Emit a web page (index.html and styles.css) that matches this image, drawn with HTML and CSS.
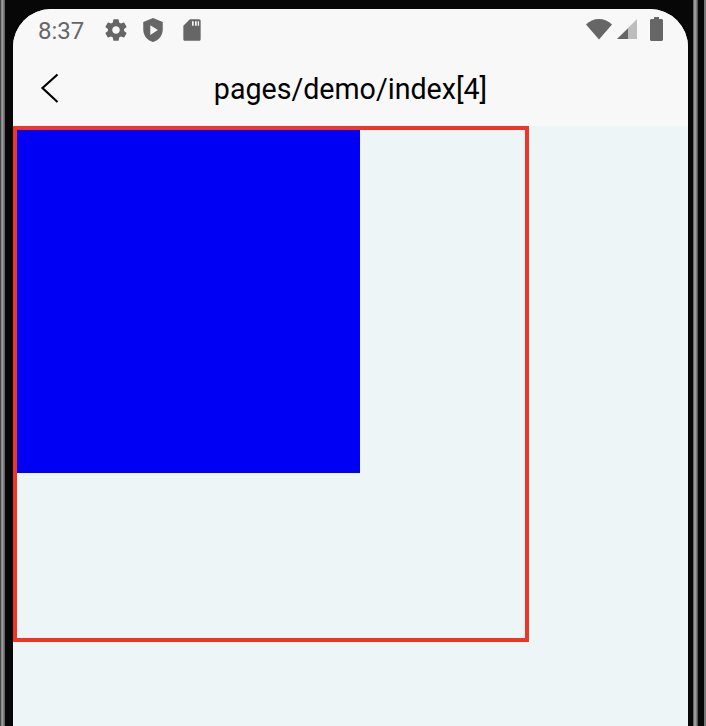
FILE: index.html
```html
<!DOCTYPE html>
<html lang="en">
<head>
<meta charset="utf-8">
<title>pages/demo/index[4]</title>
<link rel="stylesheet" href="styles.css">
</head>
<body>
<div class="device">
  <div class="rim rim-left"></div>
  <main class="screen">
    <header class="status">
      <div class="status-group">
        <span class="time">8:37</span>
        <svg class="ico ico-gear" viewBox="0 0 24 24"><path d="M19.43 12.98c.04-.32.07-.64.07-.98s-.03-.66-.07-.98l2.11-1.65c.19-.15.24-.42.12-.64l-2-3.46c-.12-.22-.39-.3-.61-.22l-2.49 1c-.52-.4-1.08-.73-1.69-.98l-.38-2.65C14.46 2.18 14.25 2 14 2h-4c-.25 0-.46.18-.49.42l-.38 2.65c-.61.25-1.17.59-1.69.98l-2.49-1c-.23-.09-.49 0-.61.22l-2 3.46c-.13.22-.07.49.12.64l2.11 1.65c-.04.32-.07.65-.07.98s.03.66.07.98l-2.11 1.65c-.19.15-.24.42-.12.64l2 3.46c.12.22.39.3.61.22l2.49-1c.52.4 1.08.73 1.69.98l.38 2.65c.03.24.24.42.49.42h4c.25 0 .46-.18.49-.42l.38-2.65c.61-.25 1.17-.59 1.69-.98l2.49 1c.23.09.49 0 .61-.22l2-3.46c.12-.22.07-.49-.12-.64l-2.11-1.65zM12 15.5c-1.93 0-3.5-1.57-3.5-3.5s1.57-3.5 3.5-3.5 3.5 1.57 3.5 3.5-1.57 3.5-3.5 3.5z"/></svg>
        <svg class="ico ico-shield" viewBox="0 0 24 24"><path fill-rule="evenodd" d="M12 1 3 4.500v7c0 5.500 3.800 10.300 9 11.500 5.200-1.200 9-6 9-11.500v-7zM9.500 7.500l7 4.500-7 4.500z"/></svg>
        <svg class="ico ico-sd" viewBox="0 0 24 24"><path fill-rule="evenodd" d="M10 2 4 8v12.500C4 21.300 4.700 22 5.500 22h13c.8 0 1.500-.7 1.500-1.500v-17C20 2.700 19.300 2 18.500 2zM12 4h1.500v4H12zM14.800 4h1.500v4h-1.500zM17.300 4h1.200v4h-1.200z"/></svg>
      </div>
      <div class="status-group status-right">
        <svg class="ico-wifi" viewBox="0 0 28 22"><path d="M14 21.500 1 6.500C4.500 3 9 1 14 1s9.500 2 13 5.500z"/></svg>
        <svg class="ico-signal" viewBox="0 0 22 20"><path class="dim" d="M21 0v20H1z"/><path d="M12 9.500V20H1z"/></svg>
        <svg class="ico-battery" viewBox="0 0 13 24"><path d="M4 0h5v2h2.500c.8 0 1.500.7 1.500 1.500v19c0 .8-.7 1.500-1.500 1.500h-10C.7 24 0 23.300 0 22.500v-19C0 2.700.7 2 1.500 2H4z"/></svg>
      </div>
    </header>
    <nav class="navbar">
      <svg class="back" viewBox="0 0 20 30"><path d="M17.500 1.500 2.500 15l15 14"/></svg>
      <h1 class="title">pages/demo/index[4]</h1>
    </nav>
    <section class="content">
      <div class="outer">
        <div class="inner"></div>
      </div>
    </section>
  </main>
  <div class="rim rim-right"></div>
</div>
</body>
</html>
```
FILE: styles.css
```css
* { box-sizing: border-box; }
html, body { margin: 0; padding: 0; height: 100%; }
body { background: #000; overflow: hidden; font-family: Roboto, "Liberation Sans", sans-serif; }
.device { display: flex; height: 726px; width: 706px; background: #070707; }
.rim { flex: none; height: 100%; }
.rim-left { width: 5px; margin-right: 8px; background: linear-gradient(90deg, #444 0 1px, #8a8a8a 1px 2px, #9a9a9a 2px 3px, #7a7a7a 3px 4px, #666 4px 5px); }
.rim-right { width: 18px; background: linear-gradient(90deg, #070707 0 5px, #666 5px 6px, #999 6px 8px, #7c7c7c 8px 9px, #555 9px 10px, #070707 10px 16px, #777 16px); }
.screen { flex: none; width: 675px; height: 717px; margin-top: 9px; border-radius: 38px 38px 0 0; overflow: hidden; background: #eef5f7; display: flex; flex-direction: column; }
.status { flex: none; height: 42px; background: #f8f8f8; display: flex; justify-content: space-between; align-items: center; padding: 0 25px; }
.status-group { display: flex; align-items: center; }
.time { font-size: 24px; color: #666; width: 65px; line-height: 28px; padding-top: 2px; height: 30px; }
.ico { width: 26px; height: 26px; fill: #666; display: block; }
.ico-shield { margin-left: 11px; }
.ico-sd { margin-left: 13px; }
.status-right { gap: 3px; padding-bottom: 2px; }
.ico-wifi { width: 28px; height: 22px; fill: #666; display: block; }
.ico-signal { width: 22px; height: 20px; fill: #666; display: block; }
.ico-signal .dim { fill: #bdbdbd; }
.ico-battery { width: 13px; height: 24px; fill: #666; display: block; margin-left: 9px; }
.navbar { flex: none; height: 75px; background: #f8f8f8; display: flex; align-items: center; justify-content: center; position: relative; }
.back { position: absolute; left: 27px; top: 22px; width: 20px; height: 30px; fill: none; stroke: #000; stroke-width: 2.2; }
.title { margin: 0; font-size: 28.6px; font-weight: 400; color: #000; line-height: 32px; }
.content { flex: 1; }
.outer { width: 516px; height: 516px; border: 4px solid #f03528; }
.inner { width: 343px; height: 343px; background: #0000f5; }
```
